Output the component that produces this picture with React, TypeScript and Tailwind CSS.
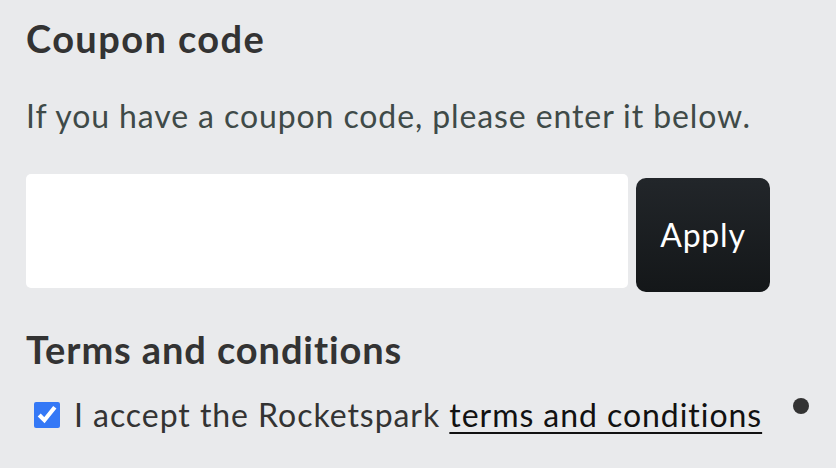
export default function App() {
  return (
    <div className="min-h-[468px] w-[836px] bg-[#e9eaec] pl-[26px] pr-[20px] pt-[15px] font-['Lato','Liberation_Sans',sans-serif]">
      <h2 className="text-[38px] font-bold leading-[46px] tracking-[1.4px] text-[#333333]">Coupon code</h2>
      <p className="mt-[35px] text-[32px] leading-[40px] tracking-[0.9px] text-[#3f4a48]">
        If you have a coupon code, please enter it below.
      </p>
      <div className="mt-[38px] flex items-start gap-[8px]">
        <input type="text" className="h-[114px] w-[602px] rounded-[5px] bg-white outline-none" />
        <button className="mt-[4px] h-[114px] w-[134px] rounded-[10px] bg-gradient-to-b from-[#22262a] to-[#141719] text-[32px] tracking-[0.8px] text-white">
          Apply
        </button>
      </div>
      <h2 className="mt-[34px] text-[38px] font-bold leading-[46px] tracking-[0.9px] text-[#333333]">
        Terms and conditions
      </h2>
      <div className="mt-[23px] flex items-start">
        <label className="flex items-center gap-[14px] pl-[8px] text-[32px] leading-[40px] tracking-[0.95px] text-[#333333]">
          <input type="checkbox" defaultChecked className="h-[26px] w-[26px] accent-[#3478f6]" />
          <span>
            I accept the Rocketspark{' '}
            <a href="#" className="text-[#111111] underline decoration-[2px] underline-offset-[5px]">
              terms and conditions
            </a>
          </span>
        </label>
        <span className="ml-[31px] mt-[3px] h-[16px] w-[16px] rounded-full bg-[#333333]" />
      </div>
    </div>
  )
}
